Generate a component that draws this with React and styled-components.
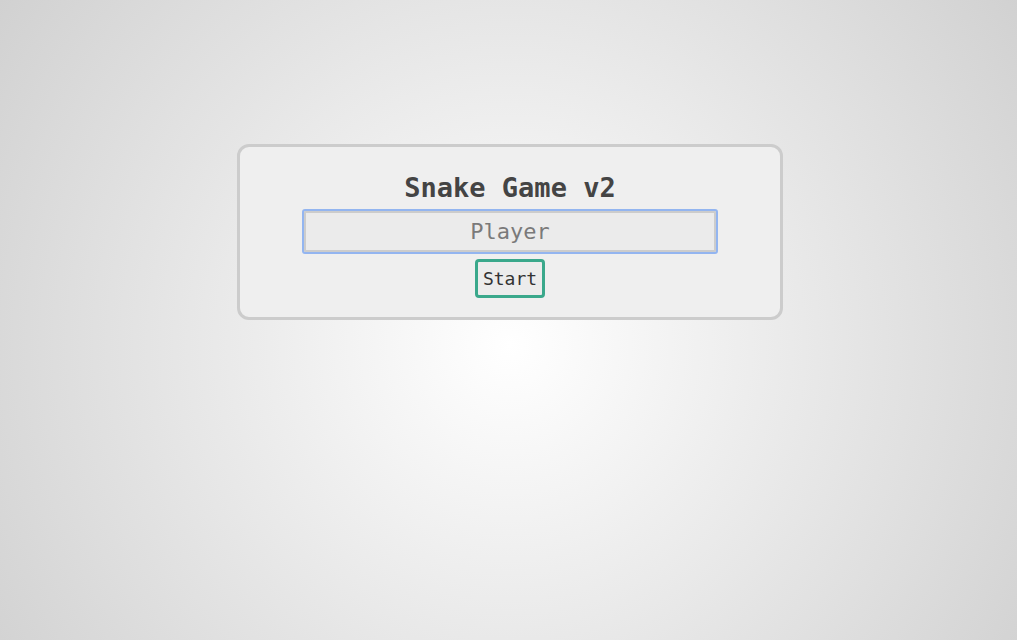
import React from 'react';
import styled, {createGlobalStyle} from "styled-components";

const GlobalStyle = createGlobalStyle`
  html, body {
    margin: 0;
    padding: 0;
    height: 100%;
  }
  body {
    background: radial-gradient(circle farthest-corner at 510px 345px, #ffffff 0%, #d1d1d1 100%);
    font-family: "DejaVu Sans Mono", "Liberation Mono", monospace;
  }
  #root {
    min-height: 100%;
  }
`;

const Page = styled.div`
  display: flex;
  justify-content: center;
  padding: 144px 0 0 3px;
`;

const Card = styled.div`
  width: 540px;
  padding: 25px 0 19px;
  display: flex;
  flex-direction: column;
  align-items: center;
  background-color: #efefef;
  border: 3px solid #cccccc;
  border-radius: 12px;
`;

const Title = styled.h1`
  margin: 0 0 7px;
  font-size: 27px;
  line-height: 32px;
  font-weight: bold;
  color: #444444;
`;

const NameInput = styled.input`
  box-sizing: border-box;
  width: 412px;
  height: 41px;
  margin: 0;
  padding: 0 8px;
  font-family: inherit;
  font-size: 22px;
  color: #333333;
  text-align: center;
  background-color: #ebebeb;
  border: 2px solid #cccccc;
  border-radius: 1px;
  caret-color: #222222;
  &::placeholder {
    color: #7a7a7a;
  }
  &:focus {
    outline: 2px solid #93b5f0;
    outline-offset: 0;
  }
`;

const StartButton = styled.button`
  margin-top: 7px;
  padding: 6px 5px;
  font-family: inherit;
  font-size: 18px;
  line-height: 21px;
  color: #333333;
  background-color: #ececec;
  border: 3px solid #3aa88b;
  border-radius: 4px;
  cursor: pointer;
`;

const App = () => {
  return (
    <>
      <GlobalStyle/>
      <Page>
        <Card>
          <Title>Snake Game v2</Title>
          <NameInput placeholder="Player" autoFocus/>
          <StartButton>Start</StartButton>
        </Card>
      </Page>
    </>
  );
};

export default App;
